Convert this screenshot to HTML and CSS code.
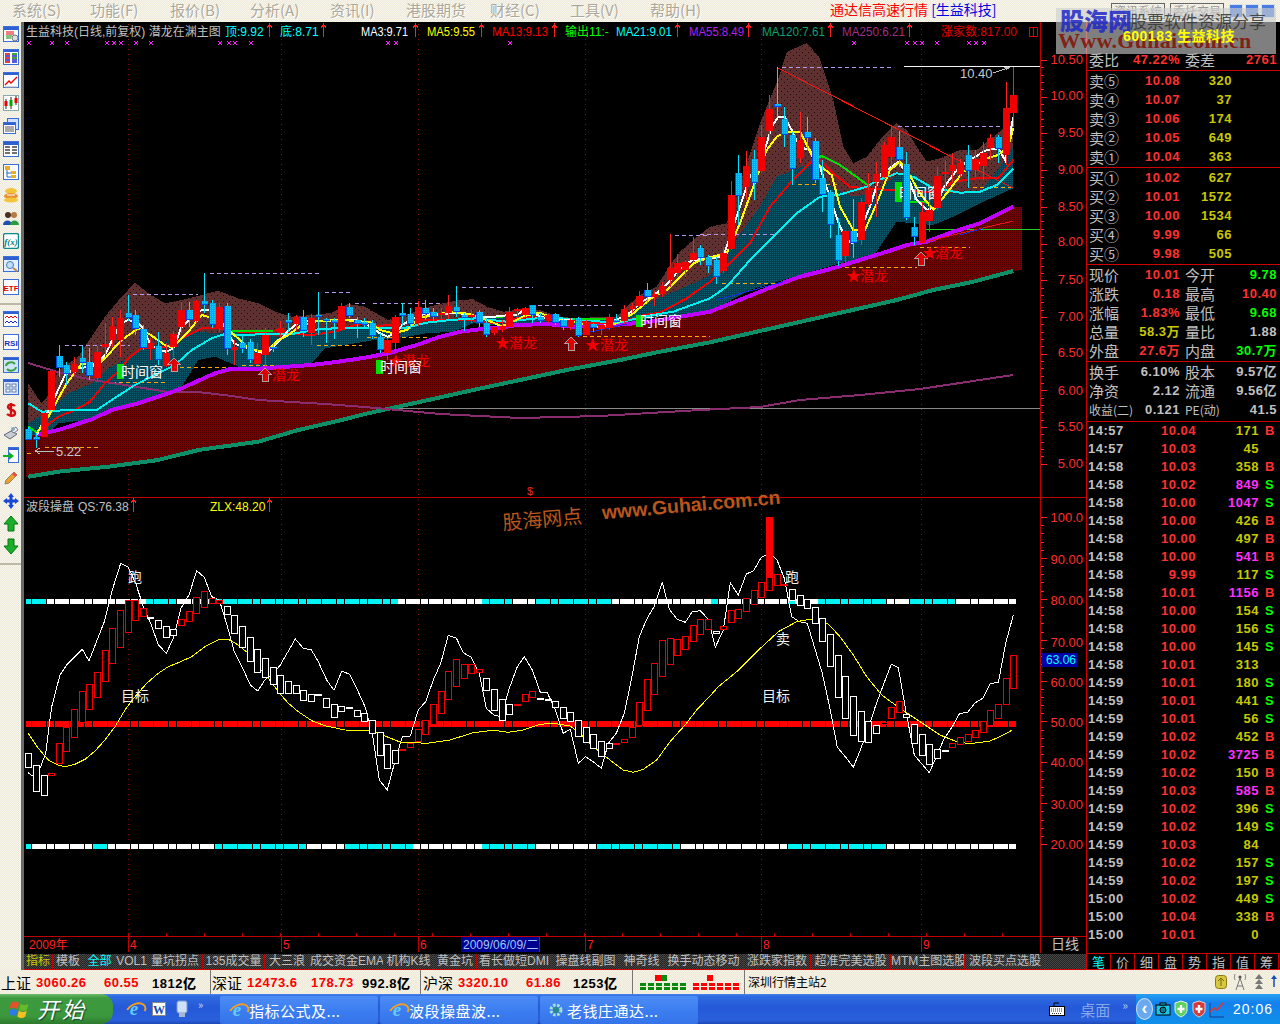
FILE: index.html
```html
<!DOCTYPE html>
<html lang="zh">
<head>
<meta charset="utf-8">
<title>通达信高速行情 [生益科技]</title>
<link rel="stylesheet" href="styles.css">
</head>
<body>
<div class="app">
  <header class="menu">
    <nav class="menu-items">
      <span>系统(S)</span><span>功能(F)</span><span>报价(B)</span><span>分析(A)</span><span>资讯(I)</span><span>港股期货</span><span>财经(C)</span><span>工具(V)</span><span>帮助(H)</span>
    </nav>
    <div class="title"><span class="title-red">通达信高速行情</span> <span class="title-blue">[生益科技]</span></div>
    <div class="win-tools">
      <span class="menu-btn">资讯系统</span><span class="menu-btn">委托交易</span>
      <span class="win-btn"></span><span class="win-btn"></span><span class="win-btn"></span>
    </div>
  </header>

  <div class="workspace">
    <aside class="tools">
      <div class="tool"><svg viewBox="0 0 16 16"><rect x=".5" y=".5" width="15" height="15" fill="#fff" stroke="#3a6ed8"/><rect x="1" y="1" width="14" height="3" fill="#2f5fd0"/><path d="M3 6h8M3 8h8" stroke="#d00"/><path d="M3 10h6M3 12h5" stroke="#080"/><circle cx="12" cy="12" r="3" fill="#ddd" stroke="#777"/></svg></div>
      <div class="tool"><svg viewBox="0 0 16 16"><rect x=".5" y=".5" width="15" height="15" fill="#fff" stroke="#3a6ed8"/><rect x="1" y="1" width="14" height="2" fill="#2f5fd0"/><path d="M2 5h5M2 9h5M2 13h5" stroke="#d00" stroke-width="1.4"/><path d="M9 5h5M9 9h5" stroke="#080" stroke-width="1.4"/><path d="M2 7h5M9 7h5M2 11h5M9 11h5M9 13h5" stroke="#22c" stroke-width="1.4"/></svg></div>
      <div class="tool"><svg viewBox="0 0 16 16"><rect x=".5" y=".5" width="15" height="15" fill="#fff" stroke="#3a6ed8"/><rect x="1" y="1" width="14" height="2" fill="#2f5fd0"/><path d="M2 13l4-4 2 2 6-6" fill="none" stroke="#e00" stroke-width="1.4"/><path d="M2 15h12" stroke="#aaa"/></svg></div>
      <div class="tool"><svg viewBox="0 0 16 16"><rect x=".5" y=".5" width="15" height="15" fill="#fff" stroke="#8aa"/><path d="M3 4v10M8 2v12M13 1v9" stroke="#222"/><rect x="1.5" y="6" width="3" height="5" fill="#e00"/><rect x="6.5" y="5" width="3" height="6" fill="#0a0"/><rect x="11.5" y="3" width="3" height="5" fill="#e00"/></svg></div>
      <div class="tool"><svg viewBox="0 0 16 16"><rect x="4.5" y=".5" width="11" height="11" fill="#cfe0ff" stroke="#3a6ed8"/><rect x=".5" y="4.5" width="12" height="11" fill="#fff" stroke="#3a6ed8"/><rect x="1" y="5" width="11" height="2" fill="#2f5fd0"/><path d="M2 9h9M2 11h9M2 13h9" stroke="#555"/></svg></div>
      <div class="tool"><svg viewBox="0 0 16 16"><rect x=".5" y=".5" width="15" height="15" fill="#fff" stroke="#3a6ed8"/><rect x="1" y="1" width="14" height="3" fill="#2f5fd0"/><path d="M2 6h5M9 6h5M2 9h5M9 9h5M2 12h5M9 12h5" stroke="#444" stroke-width="1.4"/></svg></div>
      <div class="tool"><svg viewBox="0 0 16 16"><rect x=".5" y=".5" width="15" height="15" fill="#fff" stroke="#3a6ed8"/><rect x="2" y="2" width="5" height="4" fill="#e8b020"/><path d="M4 6v7h4M4 9h4" stroke="#26c" fill="none"/><rect x="8" y="7" width="5" height="3" fill="#e8b020"/><rect x="8" y="11" width="5" height="3" fill="#e8b020"/></svg></div>
      <div class="tool"><svg viewBox="0 0 16 16"><ellipse cx="8" cy="4" rx="6" ry="3" fill="#f4c53a"/><ellipse cx="8" cy="9" rx="7" ry="3" fill="#e89030"/><ellipse cx="8" cy="13" rx="7" ry="2.6" fill="#f4c53a"/><path d="M4 8h8" stroke="#fff"/></svg></div>
      <div class="tool"><svg viewBox="0 0 16 16"><circle cx="5" cy="5" r="3" fill="#4a3020"/><circle cx="11" cy="5" r="3" fill="#b87a40"/><path d="M0 15c0-6 9-6 9 0z" fill="#1c4fb0"/><path d="M7 15c0-6 9-6 9 0z" fill="#2a9a40"/></svg></div>
      <div class="tool"><svg viewBox="0 0 16 16"><rect x=".5" y=".5" width="15" height="15" rx="2" fill="#fff" stroke="#0a8a8a" stroke-width="1.4"/><text x="8" y="12" class="icon-fx">f(x)</text></svg></div>
      <div class="tool"><svg viewBox="0 0 16 16"><rect x=".5" y=".5" width="15" height="15" fill="#e4efff" stroke="#3a6ed8"/><rect x="1" y="1" width="14" height="3" fill="#2f5fd0"/><circle cx="7" cy="9" r="3.5" fill="#bfe0ff" stroke="#4a7ab8"/><path d="M10 12l4 3" stroke="#c88a30" stroke-width="2"/></svg></div>
      <div class="tool"><svg viewBox="0 0 16 16"><rect x=".5" y=".5" width="15" height="15" fill="#fff" stroke="#3a6ed8"/><text x="8" y="12" class="icon-etf">ETF</text></svg></div>
      <div class="tool-sep"></div>
      <div class="tool tool-b"><svg viewBox="0 0 16 16"><rect x=".5" y=".5" width="15" height="15" fill="#fff" stroke="#3a6ed8"/><rect x="1" y="1" width="14" height="2" fill="#2f5fd0"/><path d="M2 7l2-2 2 2 2-2 2 2 2-2 2 2" fill="none" stroke="#e00"/><path d="M2 12l2-2 2 2 2-2 2 2 2-2 2 2" fill="none" stroke="#22c"/></svg></div>
      <div class="tool tool-b"><svg viewBox="0 0 16 16"><rect x=".5" y=".5" width="15" height="15" fill="#fff" stroke="#3a6ed8"/><text x="8" y="12" class="icon-rsi">RSI</text></svg></div>
      <div class="tool tool-b"><svg viewBox="0 0 16 16"><rect x=".5" y=".5" width="15" height="15" fill="#cfe4f8" stroke="#3a6ed8"/><rect x="1" y="1" width="14" height="2" fill="#2f5fd0"/><path d="M3 9a5 4 0 0 1 9-2M13 10a5 4 0 0 1-9 2" fill="none" stroke="#3aa040" stroke-width="2"/></svg></div>
      <div class="tool tool-b"><svg viewBox="0 0 16 16"><rect x=".5" y=".5" width="15" height="15" fill="#dfeaff" stroke="#3a6ed8"/><rect x="1" y="1" width="14" height="2" fill="#2f5fd0"/><rect x="3" y="5" width="4" height="3" fill="#fff" stroke="#5a7ab0"/><rect x="9" y="5" width="4" height="3" fill="#fff" stroke="#5a7ab0"/><rect x="3" y="10" width="4" height="3" fill="#fff" stroke="#5a7ab0"/><rect x="9" y="10" width="4" height="3" fill="#fff" stroke="#5a7ab0"/></svg></div>
      <div class="tool tool-b"><svg viewBox="0 0 16 16"><path d="M12 4c-2-2-7-2-7 1s7 2 7 6-6 3-8 1M8 1v14" fill="none" stroke="#d01010" stroke-width="2.4"/></svg></div>
      <div class="tool tool-b"><svg viewBox="0 0 16 16"><path d="M1 10l7-4 6 3-7 5z" fill="#c8ccd4" stroke="#667"/><path d="M8 6l5-4 2 3-4 3z" fill="#eef" stroke="#778"/><circle cx="10" cy="4" r="2" fill="#8ab"/></svg></div>
      <div class="tool tool-b"><svg viewBox="0 0 16 16"><rect x="5.5" y=".5" width="10" height="15" fill="#fff" stroke="#3a6ed8"/><rect x="6" y="1" width="9" height="2" fill="#2f5fd0"/><path d="M0 8h6V5l5 4-5 4v-3H0z" fill="#10b020"/></svg></div>
      <div class="tool tool-b"><svg viewBox="0 0 16 16"><path d="M11 2l3 3-8 8-4 1 1-4z" fill="#f0a030" stroke="#885"/><path d="M11 2l3 3-2 2-3-3z" fill="#e85050"/></svg></div>
      <div class="tool tool-b"><svg viewBox="0 0 16 16"><path d="M8 0l3 4H9.500v2.500H12V5l4 3-4 3V9.500H9.500V12H11l-3 4-3-4h1.500V9.500H4V11L0 8l4-3v1.500h2.500V4H5z" fill="#1848d8"/></svg></div>
      <div class="tool tool-b"><svg viewBox="0 0 16 16"><path d="M8 0l7 8h-4v7H5V8H1z" fill="#18b028" stroke="#0a7015"/></svg></div>
      <div class="tool tool-b"><svg viewBox="0 0 16 16"><path d="M8 16L1 8h4V1h6v7h4z" fill="#18b028" stroke="#0a7015"/></svg></div>
      <div class="tool-sep"></div>
    </aside>

    <main class="main">
      <svg class="chart" viewBox="24 22 1062 931" width="1062" height="931" xmlns="http://www.w3.org/2000/svg">
        <defs>
          <pattern id="brownDots" width="6" height="6" patternUnits="userSpaceOnUse"><rect width="6" height="6" fill="#5e3030"/><rect x="1" y="1" width="1" height="1" fill="#200c0c"/><rect x="4" y="4" width="1" height="1" fill="#200c0c"/></pattern>
          <pattern id="tealDots" width="2" height="2" patternUnits="userSpaceOnUse"><rect width="2" height="2" fill="#083f50"/><rect width="1" height="1" fill="#0b5c6e"/></pattern>
          <pattern id="redDots" width="2" height="2" patternUnits="userSpaceOnUse"><rect width="2" height="2" fill="#740000"/><rect width="1" height="1" fill="#4c0000"/></pattern>
          <pattern id="blueDots" width="2" height="2" patternUnits="userSpaceOnUse"><rect width="2" height="2" fill="#00a8f8"/><rect width="1" height="1" fill="#10d0ff"/></pattern>
          <g id="up"><path d="M3.500 1V14M1 5L3.500 1L6 5" fill="none" stroke="#ff2020"/></g>
        </defs>
        <rect x="24" y="22" width="1062" height="931" fill="#000"/>
        <g id="plot"></g>

        <g class="lab12">
          <text x="26" y="36" fill="#c0c0c0">生益科技(日线,前复权) 潜龙在渊主图</text>
          <text x="225" y="36" fill="#00ffff">顶:9.92</text><use href="#up" x="266" y="23"/>
          <text x="280" y="36" fill="#00ffff">底:8.71</text><use href="#up" x="320" y="23"/>
          <text x="361" y="36" fill="#fff" textLength="47" lengthAdjust="spacingAndGlyphs">MA3:9.71</text><use href="#up" x="412" y="23"/>
          <text x="427" y="36" fill="#ff0" textLength="48" lengthAdjust="spacingAndGlyphs">MA5:9.55</text><use href="#up" x="478" y="23"/>
          <text x="492" y="36" fill="#f00" textLength="56" lengthAdjust="spacingAndGlyphs">MA13:9.13</text><use href="#up" x="551" y="23"/>
          <text x="565" y="36" fill="#0f0">输出11:-</text>
          <text x="616" y="36" fill="#00ffff" textLength="56" lengthAdjust="spacingAndGlyphs">MA21:9.01</text><use href="#up" x="674" y="23"/>
          <text x="689" y="36" fill="#b020f0" textLength="55" lengthAdjust="spacingAndGlyphs">MA55:8.49</text><use href="#up" x="745" y="23"/>
          <text x="762" y="36" fill="#0fa070" textLength="63" lengthAdjust="spacingAndGlyphs">MA120:7.61</text><use href="#up" x="827" y="23"/>
          <text x="842" y="36" fill="#a03080" textLength="63" lengthAdjust="spacingAndGlyphs">MA250:6.21</text><use href="#up" x="906" y="23"/>
          <text x="941" y="36" fill="#e00000">涨家数:817.00</text>
        </g>
        <path d="M1029.500 27.500h8v9h-8zM1033.500 27.500v9" class="box-mark"/>

        <g class="lab13">
          <text x="960" y="78" fill="#c8c8c8">10.40</text>
          <text x="56" y="456" fill="#c8c8c8">5.22</text>
        </g>
        <path d="M993 73L1008 68M1004 67L1010 67L1006 70" fill="none" stroke="#c0c0c0"/>
        <path d="M54 451H36M40 448L35 451L40 454" fill="none" stroke="#c0c0c0"/>

        <g class="lab-signal">
          <text x="860" y="281">潜龙</text><text x="935" y="258">潜龙</text>
          <text x="509" y="348">潜龙</text><text x="600" y="350">潜龙</text>
          <text x="402" y="366">潜龙</text><text x="272" y="380">潜龙</text>
        </g>
        <g class="lab-star">
          <text x="846" y="281">★</text><text x="922" y="258">★</text>
          <text x="495" y="348">★</text><text x="585" y="350">★</text>
          <text x="388" y="366">★</text>
        </g>
        <g class="lab-win">
          <rect x="117" y="364" width="7" height="15" fill="#00e000"/><text x="121" y="377">时间窗</text>
          <rect x="376" y="360" width="7" height="14" fill="#00e000"/><text x="380" y="372">时间窗</text>
          <rect x="636" y="315" width="7" height="12" fill="#00e000"/><text x="640" y="326">时间窗</text>
          <rect x="895" y="182" width="7" height="20" fill="#00e000"/><text x="899" y="198">时间窗</text>
        </g>
        <g id="replot"></g>

        <text x="527" y="495" class="mini-s">$</text>

        <g class="lab12">
          <text x="26" y="511" fill="#c0c0c0">波段操盘</text>
          <text x="78" y="511" fill="#c0c0c0">QS:76.38</text><use href="#up" x="130" y="498"/>
          <text x="210" y="511" fill="#ff0">ZLX:48.20</text><use href="#up" x="266" y="498"/>
        </g>
        <g class="lab-white">
          <text x="128" y="582">跑</text><text x="785" y="582">跑</text>
          <text x="776" y="644">卖</text>
          <text x="121" y="701">目标</text><text x="762" y="701">目标</text>
        </g>

        <g id="axisLabels" class="lab-axis">
          <text x="1083" y="64">10.50</text><text x="1083" y="100">10.00</text><text x="1083" y="137">9.50</text><text x="1083" y="174">9.00</text><text x="1083" y="211">8.50</text><text x="1083" y="246">8.00</text><text x="1083" y="284">7.50</text><text x="1083" y="321">7.00</text><text x="1083" y="357">6.50</text><text x="1083" y="395">6.00</text><text x="1083" y="431">5.50</text><text x="1083" y="468">5.00</text>
          <text x="1083" y="522">100.0</text><text x="1083" y="564">90.00</text><text x="1083" y="605">80.00</text><text x="1083" y="647">70.00</text><text x="1083" y="687">60.00</text><text x="1083" y="727">50.00</text><text x="1083" y="767">40.00</text><text x="1083" y="809">30.00</text><text x="1083" y="849">20.00</text>
        </g>
        <rect x="1042" y="653" width="36" height="14" fill="#0000a8"/>
        <text x="1076" y="664" class="lab-cur">63.06</text>

        <g class="brand" transform="rotate(-5 503 530)">
          <text x="503" y="530" class="brand-cn">股海网点</text>
          <text x="603" y="528" class="brand-en">www.Guhai.com.cn</text>
        </g>

        <rect x="461" y="937" width="78" height="15" fill="#000090"/>
        <g class="lab-date">
          <text x="29" y="949">2009年</text><text x="130" y="949">4</text><text x="283" y="949">5</text><text x="420" y="949">6</text><text x="587" y="949">7</text><text x="763" y="949">8</text><text x="923" y="949">9</text>
          <text x="463" y="949" class="date-sel">2009/06/09/二</text>
          <text x="1051" y="949" class="date-kind">日线</text>
        </g>
      </svg>

      <section class="panel">
        <div class="q-head">
          <div class="stock">600183 生益科技</div>
          <div class="q-stat"><span class="lb">委比</span><b class="red">47.22%</b><span class="lb lb2">委差</span><b class="red">2761</b></div>
        </div>
        <div class="q-group">
          <div class="q-row"><span class="lb">卖⑤</span><b class="red">10.08</b><b class="yel">320</b></div>
          <div class="q-row"><span class="lb">卖④</span><b class="red">10.07</b><b class="yel">37</b></div>
          <div class="q-row"><span class="lb">卖③</span><b class="red">10.06</b><b class="yel">174</b></div>
          <div class="q-row"><span class="lb">卖②</span><b class="red">10.05</b><b class="yel">649</b></div>
          <div class="q-row"><span class="lb">卖①</span><b class="red">10.04</b><b class="yel">363</b></div>
        </div>
        <div class="q-group">
          <div class="q-row"><span class="lb">买①</span><b class="red">10.02</b><b class="yel">627</b></div>
          <div class="q-row"><span class="lb">买②</span><b class="red">10.01</b><b class="yel">1572</b></div>
          <div class="q-row"><span class="lb">买③</span><b class="red">10.00</b><b class="yel">1534</b></div>
          <div class="q-row"><span class="lb">买④</span><b class="red">9.99</b><b class="yel">66</b></div>
          <div class="q-row"><span class="lb">买⑤</span><b class="red">9.98</b><b class="yel">505</b></div>
        </div>
        <div class="q-group">
          <div class="q-stat"><span class="lb">现价</span><b class="red">10.01</b><span class="lb lb2">今开</span><b class="grn">9.78</b></div>
          <div class="q-stat"><span class="lb">涨跌</span><b class="red">0.18</b><span class="lb lb2">最高</span><b class="red">10.40</b></div>
          <div class="q-stat"><span class="lb">涨幅</span><b class="red">1.83%</b><span class="lb lb2">最低</span><b class="grn">9.68</b></div>
          <div class="q-stat"><span class="lb">总量</span><b class="yel">58.3万</b><span class="lb lb2">量比</span><b class="gry">1.88</b></div>
          <div class="q-stat"><span class="lb">外盘</span><b class="red">27.6万</b><span class="lb lb2">内盘</span><b class="grn">30.7万</b></div>
        </div>
        <div class="q-group q-fund">
          <div class="q-stat"><span class="lb">换手</span><b class="gry">6.10%</b><span class="lb lb2">股本</span><b class="gry">9.57亿</b></div>
          <div class="q-stat"><span class="lb">净资</span><b class="gry">2.12</b><span class="lb lb2">流通</span><b class="gry">9.56亿</b></div>
          <div class="q-stat"><span class="lb lb-narrow">收益(二)</span><b class="gry">0.121</b><span class="lb lb2 lb-narrow">PE(动)</span><b class="gry">41.5</b></div>
        </div>
        <div class="ticks" id="ticks"></div>
      </section>

      <div class="tabs">
        <span class="tab c-yel">指标</span><span class="tab">模板</span><span class="tab c-cyan">全部</span><span class="tab">VOL1</span><span class="tab">量坑拐点</span><span class="tab">135成交量</span><span class="tab">大三浪</span><span class="tab">成交资金EMA</span><span class="tab">机构K线</span><span class="tab">黄金坑</span><span class="tab">看长做短DMI</span><span class="tab">操盘线副图</span><span class="tab">神奇线</span><span class="tab">换手动态移动</span><span class="tab">涨跌家指数</span><span class="tab">超准完美选股</span><span class="tab">MTM主图选股</span><span class="tab">波段买点选股</span><span class="tab"></span>
      </div>
      <div class="side-tabs">
        <span class="c-cyan">笔</span><span>价</span><span>细</span><span>盘</span><span>势</span><span>指</span><span>值</span><span>筹</span>
      </div>
    </main>
  </div>

  <footer class="status">
    <div class="idx idx-a"><span class="idx-n">上证</span><b class="s-red">3060.26</b><b class="s-red">60.55</b><b>1812亿</b></div>
    <div class="idx idx-b"><span class="idx-n">深证</span><b class="s-red">12473.6</b><b class="s-red">178.73</b><b>992.8亿</b></div>
    <div class="idx idx-c"><span class="idx-n">沪深</span><b class="s-red">3320.10</b><b class="s-red">61.86</b><b>1253亿</b></div>
    <svg class="bars" viewBox="0 0 102 24" width="102" height="24">
      <rect x="15" y="5" width="6" height="6" fill="#f00"/><rect x="21" y="5" width="6" height="6" fill="#0a8a0a"/><rect x="67" y="5" width="6" height="6" fill="#f00"/>
      <path d="M0 14.500h47M0 18.500h47" stroke="#0a8a0a" stroke-width="3" stroke-dasharray="6 2"/>
      <path d="M53 14.500h47M53 18.500h47" stroke="#f00" stroke-width="3" stroke-dasharray="6 2"/>
    </svg>
    <span class="station">深圳行情主站2</span>
    <div class="status-icons">
      <svg viewBox="0 0 12 14" width="12" height="14"><rect x=".5" y=".5" width="11" height="13" rx="3" fill="#d8c840" stroke="#887a10"/><path d="M6 3v8M3 6l3-3 3 3" fill="none" stroke="#776a00"/></svg>
      <svg viewBox="0 0 14 18" width="14" height="18"><path d="M7 5L3 17M7 5l4 12M4 13h6" fill="none" stroke="#777"/><circle cx="7" cy="4" r="1.600" fill="#555"/><path d="M2 1a7 7 0 0 0 0 6M12 1a7 7 0 0 1 0 6" fill="none" stroke="#888"/></svg>
      <svg viewBox="0 0 12 16" width="12" height="16"><path d="M6 0l4 5H2zM6 5l4 5H2zM6 10l4 5H2z" fill="#777"/></svg>
      <svg viewBox="0 0 6 14" width="6" height="14"><path d="M3 1v11" stroke="#124ac0" stroke-width="1.500"/><path d="M3 0l3 4H0z" fill="#124ac0"/></svg>
    </div>
  </footer>

  <div class="taskbar">
    <div class="start">
      <svg viewBox="0 0 22 22" width="22" height="22"><path d="M2 5q4-3 8 0l-1.500 6q-4-3-8 0z" fill="#e8502a"/><path d="M11.500 5.500q4 3 8 0l-1.500 6q-4 3-8 0z" fill="#66bb2a"/><path d="M.300 12.500q4-3 8 0L7 18.500q-4-3-8 0z" fill="#2a7ae8"/><path d="M9.800 12.500q4 3 8 0l-1.500 6q-4 3-8 0z" fill="#f4c020"/></svg>
      <span class="start-t">开始</span>
    </div>
    <div class="quick">
      <span class="ie">e</span>
      <span class="word">W</span>
      <svg viewBox="0 0 14 18" width="14" height="18"><rect x="2" y="1" width="10" height="12" rx="2" fill="#cfe0f8" stroke="#7a9ad0"/><rect x="4" y="13" width="6" height="4" fill="#a8b8d0"/></svg>
      <span class="more">»</span>
    </div>
    <div class="task"><span class="ie">e</span><span class="task-t">指标公式及...</span></div>
    <div class="task"><span class="ie">e</span><span class="task-t">波段操盘波...</span></div>
    <div class="task"><svg viewBox="0 0 16 16" width="16" height="16"><circle cx="8" cy="8" r="5" fill="none" stroke="#a8e0d8" stroke-width="3" stroke-dasharray="2.500 1.500"/><circle cx="8" cy="8" r="3" fill="#2a8a8a"/></svg><span class="task-t">老钱庄通达...</span></div>
    <div class="task-tail">
      <svg viewBox="0 0 16 16" width="16" height="16"><rect x=".5" y="5.500" width="15" height="9" fill="#fff" stroke="#000"/><path d="M2 8h12M2 10h12M3 12.500h10" stroke="#333" stroke-dasharray="1 1"/><path d="M5 5V2h5" fill="none" stroke="#000"/></svg>
      <span class="desk">桌面</span><span class="desk-more">»</span>
    </div>
    <div class="tray">
      <span class="chev">‹</span>
      <svg viewBox="0 0 16 16" width="16" height="16"><rect x="1" y="4" width="14" height="10" fill="#18c8e8" stroke="#000"/><circle cx="8" cy="9" r="3" fill="#0a7a90" stroke="#000"/><rect x="5" y="2" width="6" height="2" fill="#18c8e8" stroke="#000"/></svg>
      <svg viewBox="0 0 16 18" width="16" height="18"><path d="M8 1l6 2v7c0 4-4 6-6 7-2-1-6-3-6-7V3z" fill="#60d060" stroke="#e8f4e8"/><path d="M8 5v8M4.500 9h7" stroke="#fff" stroke-width="2.400"/></svg>
      <svg viewBox="0 0 16 18" width="16" height="18"><path d="M8 1l6 2v7c0 4-4 6-6 7-2-1-6-3-6-7V3z" fill="#d83838" stroke="#d8d8d8"/><path d="M8 5v8M4.500 9h7" stroke="#fff" stroke-width="2.400"/></svg>
      <svg viewBox="0 0 16 18" width="16" height="18"><path d="M1 3v14h14" fill="none" stroke="#123a90"/><path d="M1 12l4-4 3 2 6-7" fill="none" stroke="#f03020" stroke-width="1.500"/></svg>
      <span class="clock">20:06</span>
    </div>
  </div>

  <div class="watermark">
    <span class="wm-cn">股海网</span><span class="wm-sub">股票软件资源分享</span>
    <span class="wm-en">Www.Guhai.com.cn</span>
  </div>
</div>
<script src="chart.js"></script>
</body>
</html>
```
FILE: styles.css
```css
* { box-sizing: border-box; }
html, body { margin: 0; padding: 0; background: #000; }
body { font-family: "Liberation Sans", "Noto Sans CJK SC", sans-serif; }
.app { position: relative; width: 1280px; height: 1024px; overflow: hidden; display: flex; flex-direction: column; }

.menu { height: 22px; flex: none; display: flex; align-items: flex-start; padding-left: 12px;
  background: repeating-conic-gradient(#ece9d8 0 25%, #f8f6ee 0 50%) 0 0 / 2px 2px; }
.menu-items { display: grid; grid-template-columns: 78px 80px 80px 80px 76px 84px 80px 80px 80px; width: 738px; flex: none;
  font: 15px/19px "Noto Sans CJK SC", sans-serif; color: #aca899; text-shadow: 1px 1px 0 #fff; }
.title { margin-left: 80px; font: 14px/19px "Noto Sans CJK SC", sans-serif; white-space: nowrap; }
.title-red { color: #f00; }
.title-blue { color: #0000e0; }
.win-tools { margin-left: auto; display: flex; align-items: center; gap: 2px; padding: 3px 5px 0 0; }
.menu-btn { width: 54px; height: 16px; border: 1px solid #666; font: 12px/14px "Noto Sans CJK SC", sans-serif; color: #999; text-align: center; margin-right: 3px; }
.win-btn { width: 14px; height: 14px; background: #4a7ce0; border: 1px solid #d8e0f0; }

.workspace { height: 948px; flex: none; display: flex; }
.tools { width: 24px; flex: none; display: flex; flex-direction: column; align-items: flex-start;
  background: repeating-conic-gradient(#ece9d8 0 25%, #f8f6ee 0 50%) 0 0 / 2px 2px;
  border-right: 3px solid #6a6a6a; }
.tool { height: 23px; width: 21px; display: flex; align-items: center; justify-content: center; flex: none; }
.tool-b { height: 22.7px; }
.tool svg { width: 16px; height: 16px; display: block; }
.tool-sep { height: 10px; width: 21px; flex: none; border-top: 5px solid transparent; border-bottom: 3px solid transparent; background: #bcb8a8; background-clip: content-box; }
.icon-fx { font: italic bold 9px "Liberation Serif", serif; fill: #0a7a7a; text-anchor: middle; }
.icon-etf { font: bold 8px "Liberation Sans", sans-serif; fill: #d00; text-anchor: middle; }
.icon-rsi { font: bold 8px "Liberation Sans", sans-serif; fill: #1030c0; text-anchor: middle; }

.main { width: 1256px; background: #000; display: grid; grid-template-columns: 1062px 194px; grid-template-rows: 931px 17px; }
.chart { display: block; shape-rendering: crispEdges; }
.lab12 text { font: 12px "Liberation Sans", "Noto Sans CJK SC", sans-serif; }
.lab13 text { font: 13px "Liberation Sans", sans-serif; }
.box-mark { fill: none; stroke: #e00000; }
.lab-signal text { font: 14px "Noto Sans CJK SC", sans-serif; fill: #f00000; }
.lab-star text { font: 15px "Noto Sans CJK SC", sans-serif; fill: #f00000; }
.lab-win text { font: 14px "Noto Sans CJK SC", sans-serif; fill: #fff; }
.lab-white text { font: 14px "Noto Sans CJK SC", sans-serif; fill: #f0f0f0; }
.lab-axis text { font: 13px "Liberation Sans", sans-serif; fill: #ff2c2c; text-anchor: end; }
.lab-cur { font: 12px "Liberation Sans", sans-serif; fill: #00ffff; text-anchor: end; }
.mini-s { font: 11px "Liberation Sans", sans-serif; fill: #e03020; }
.brand-cn { font: 20px "Noto Sans CJK SC", sans-serif; fill: #b8561c; }
.brand-en { font: bold 19.500px "Liberation Sans", sans-serif; fill: #b8561c; }
.lab-date text { font: 12px "Liberation Sans", "Noto Sans CJK SC", sans-serif; fill: #ff2020; }
.lab-date .date-sel { fill: #9fc8ff; }
.lab-date .date-kind { fill: #c0c0c0; font-size: 14px; }

.panel { border-left: 1px solid #d00000; background: #000; grid-row: 1; grid-column: 2; height: 931px; overflow: hidden;
  font-family: "Noto Sans CJK SC", sans-serif; }
.q-head { height: 49px; border-bottom: 1px solid #d00000; padding-bottom: 1px; display: flex; flex-direction: column; justify-content: flex-end; }
.stock { position: relative; z-index: 2; height: 27px; padding-left: 36px; font: bold 14px/27px "Liberation Sans", "Noto Sans CJK SC", sans-serif; color: #ff0; letter-spacing: .5px; }
.q-group { height: 97px; border-bottom: 1px solid #d00000; }
.q-fund { height: 60px; }
.q-row, .q-stat { height: 19px; display: grid; align-items: center; padding-left: 2px; font-size: 13px; line-height: 19px; white-space: nowrap; }
.q-row { grid-template-columns: 32px 59px 52px; }
.q-stat { grid-template-columns: 32px 59px 37px 60px; }
.q-row b, .q-stat b { text-align: right; font: bold 13px/19px "Liberation Sans", "Noto Sans CJK SC", sans-serif; letter-spacing: .5px; }
.lb { font: 15px/19px "Noto Sans CJK SC", sans-serif; color: #c0c0c0; }
.lb2 { padding-left: 5px; }
.lb-narrow { font-size: 12px; overflow: visible; }
.red { color: #ff3030; }
.yel { color: #c8c800; }
.grn { color: #00ff00; }
.gry { color: #c0c0c0; }
.mag { color: #ff30ff; }

.ticks { padding-left: 1px; }
.tick { height: 18px; display: grid; grid-template-columns: 38px 70px 63px 20px; align-items: center; font: bold 13px/18px "Liberation Sans", sans-serif; letter-spacing: .5px; }
.tick-t { color: #c0c0c0; }
.tick-p { text-align: right; color: #ff3030; }
.tick-v { text-align: right; }
.tick-f { padding-left: 6px; }

.tabs { grid-row: 2; grid-column: 1; display: grid; height: 17px;
  grid-template-columns: 29px 31px 32px 32px 55px 62px 45px 74px 50px 43px 75px 68px 44px 80px 67px 80px 74px 81px 1fr;
  background: repeating-conic-gradient(#222 0 25%, #484848 0 50%) 0 0 / 2px 2px;
  border-bottom: 1px solid #d00000; border-top: 1px solid #000; }
.tab { border-right: 1px solid #c00000; text-align: center; font: 12px/15px "Liberation Sans", "Noto Sans CJK SC", sans-serif; color: #c0c0c0; white-space: nowrap; overflow: hidden; }
.side-tabs { grid-row: 2; grid-column: 2; display: grid; grid-template-columns: repeat(8, 24px); height: 17px; border-left: 1px solid #d00000; border-bottom: 1px solid #d00000; border-top: 1px solid #d00000; }
.side-tabs span { border-right: 1px solid #c00000; text-align: center; font: 13px/15px "Noto Sans CJK SC", sans-serif; color: #c0c0c0; }
.tab.c-yel { color: #c8c800; }
.side-tabs .c-cyan, .tab.c-cyan { color: #00ffff; }

.status { height: 24px; flex: none; display: flex; align-items: center;
  background: repeating-conic-gradient(#ece9d8 0 25%, #f6f3e6 0 50%) 0 0 / 2px 2px; color: #000; }
.idx { display: grid; align-items: center; height: 24px; white-space: nowrap; border-right: 1px solid #777; font: bold 13px "Liberation Sans", "Noto Sans CJK SC", sans-serif; letter-spacing: .5px; }
.idx-a { width: 211px; padding-left: 1px; grid-template-columns: 35px 68px 48px 1fr; }
.idx-b { width: 210px; padding-left: 1px; grid-template-columns: 35px 64px 51px 1fr; }
.idx-c { width: 212px; padding-left: 2px; grid-template-columns: 35px 68px 47px 1fr; }
.idx-n { font: 15px "Noto Sans CJK SC", sans-serif; letter-spacing: 0; }
.s-red { color: #f00; }
.bars { margin-left: 7px; flex: none; }
.station { margin-left: 2px; padding-left: 3px; border-left: 1px solid #777; font: 12px/24px "Noto Sans CJK SC", sans-serif; white-space: nowrap; }
.status-icons { margin-left: auto; display: flex; align-items: center; gap: 6px; padding-right: 3px; }
.status-icons svg { display: block; }

.taskbar { height: 30px; flex: none; display: flex; align-items: stretch; color: #fff;
  background: linear-gradient(#4c86ec 0, #2f6be0 2px, #2458d8 14px, #2a60dc 26px, #1d48b8 100%); font-family: "Noto Sans CJK SC", sans-serif; }
.start { width: 113px; height: 30px; flex: none; display: flex; align-items: center; gap: 6px; padding-left: 9px; border-radius: 0 12px 12px 0;
  background: linear-gradient(#6cbb6c 0, #3e9a3e 4px, #3c983c 22px, #2c7a2c 100%); }
.start-t { display: block; margin-top: -2px; font: italic 22px "Noto Sans CJK SC", sans-serif; text-shadow: 1px 1px 1px #143; letter-spacing: 3px; }
.quick { width: 107px; flex: none; display: flex; align-items: center; gap: 9px; padding-left: 12px; }
.more { font-size: 11px; color: #cde; margin-top: -10px; }
.ie { position: relative; width: 18px; height: 18px; flex: none; display: block; font: italic bold 19px/17px "Liberation Serif", serif; color: #62ccff; text-align: center; }
.ie::after { content: ""; position: absolute; left: 0; top: 3px; width: 18px; height: 11px; border: 2px solid #f0a020; border-left-color: transparent; border-bottom-color: transparent; border-radius: 50%; transform: rotate(-25deg); }
.word { width: 14px; height: 14px; flex: none; background: #fff; color: #1848b0; font: bold 12px/14px "Liberation Serif", serif; text-align: center; border: 1px solid #888; }
.task { width: 158px; margin: 2px 2px 0 0; flex: none; display: flex; align-items: center; gap: 3px; padding-left: 8px; background: linear-gradient(#4c8cf6, #3a7cf0 60%, #3574e8); border-radius: 2px; }
.task-t { font-size: 15px; white-space: nowrap; letter-spacing: .5px; }
.task-tail { flex: 1; display: flex; align-items: center; justify-content: flex-end; gap: 15px; padding-right: 18px; }
.desk { font-size: 15px; color: #88a8e8; }
.desk-more { font-size: 12px; color: #a8c8f0; margin: -10px -10px 0 -3px; }
.tray { width: 144px; flex: none; display: flex; align-items: center; gap: 2px; background: linear-gradient(#26a0f0, #1480ee 30%, #1090e8); }
.chev { width: 17px; height: 22px; flex: none; border-radius: 50%; background: #6aa8f0; font: bold 18px/18px "Liberation Sans", sans-serif; text-align: center; border: 1px solid #cde; }
.clock { margin-left: 6px; font: 14px "Liberation Sans", sans-serif; letter-spacing: 1px; }

.watermark { position: absolute; z-index: 1; left: 1056px; top: 8px; width: 220px; height: 46px; background: rgba(205, 205, 205, .62); pointer-events: none; }
.wm-cn { position: absolute; left: 4px; top: -3px; font: 900 24px/30px "Noto Sans CJK SC", sans-serif; color: rgba(30, 40, 200, .85); }
.wm-sub { position: absolute; left: 74px; top: 1px; font: 17px/24px "Noto Sans CJK SC", sans-serif; color: rgba(50, 50, 50, .85); white-space: nowrap; }
.wm-en { position: absolute; left: 2px; top: 20px; font: bold 22px/26px "Liberation Serif", serif; color: rgba(130, 20, 10, .9); white-space: nowrap; letter-spacing: .3px; }
```
FILE: chart.js
```js
const NS = 'http://www.w3.org/2000/svg';
const plot = document.getElementById('plot');
const replot = document.getElementById('replot');
let layer = plot;
const X = i => 28.3 + 7.636 * i;
const Z8 = [25, 260], Z11 = [360, 220], Z7 = [700, 60];
const L9 = [25, 550], L12 = [360, 570], L10 = [700, 500];

function el(tag, attrs, parent) {
  const e = document.createElementNS(NS, tag);
  for (const k in attrs) e.setAttribute(k, attrs[k]);
  (parent || layer).appendChild(e);
  return e;
}
function pts(o, a) {
  const out = [];
  for (let i = 0; i < a.length; i += 2) out.push([o[0] + a[i] / 3, o[1] + a[i + 1] / 3]);
  return out;
}
function join() {
  const out = [];
  for (const part of arguments) for (const p of part) if (!out.length || p[0] > out[out.length - 1][0]) out.push(p);
  return out;
}
const str = p => p.map(q => q[0].toFixed(1) + ',' + q[1].toFixed(1)).join(' ');
function line(p, color, w) { el('polyline', { points: str(p), fill: 'none', stroke: color, 'stroke-width': w }); }
function area(top, bottom, fill) { el('polygon', { points: str(top.concat(bottom.slice().reverse())), fill }); }
function dash(o, a, color) {
  for (let i = 0; i < a.length; i += 3) {
    const y = Math.round(o[1] + a[i + 2] / 3) + .5;
    el('line', { x1: o[0] + a[i] / 3, x2: o[0] + a[i + 1] / 3, y1: y, y2: y, stroke: color, 'stroke-dasharray': '4 3' });
  }
}

/* ---- month guides ---- */
[128.5, 281.5, 418.5, 585.5, 761.5, 921.5].forEach(x => {
  el('line', { x1: x, x2: x, y1: 24, y2: 936, stroke: '#8a1010', 'stroke-dasharray': '1 4' });
});

/* ---- envelopes ---- */
const brownTop = join(
  pts(Z8, [10,370,30,400,50,430,75,400,100,330,160,290,200,230,240,170,290,110,330,68,370,100,420,130,470,120,530,105,580,92,640,115,700,130,750,155,800,170,860,165,920,158,970,132,1020,140]),
  pts(Z11, [40,275,85,300,140,285,200,262,250,250,300,240,340,238,380,260,430,275,500,265,540,270,600,290,650,295,700,292,770,290,800,260,840,225,890,200,930,135,960,95,1000,60,1050,20]),
  pts(Z7, [80,490,130,340,180,190,237,50,260,-24,320,-51,358,-9,400,120,430,260,460,310,500,290,540,240,590,190,620,210,650,260,680,305,720,295,780,270,830,270,880,230,940,180])
);
const tealTop = join(
  pts(Z8, [10,490,60,460,130,400,200,370,250,325,300,300,340,270,400,250,470,230,520,215,580,220,640,215,700,225,760,230,820,220,900,205,1020,200]),
  pts(Z11, [40,315,85,330,140,318,200,310,250,300,340,290,430,290,500,285,600,295,700,295,800,295,860,250,930,220,1000,190,1050,165]),
  pts(Z7, [100,550,180,440,230,350,330,310,400,385,460,410,520,400,590,345,640,340,700,400,780,398,840,395,900,320,940,260])
);
const tealBottom = join(
  pts(Z8, [10,540,60,530,100,490,180,480,260,450,340,435,400,420,470,380,520,300,570,290,640,320,700,320,780,320,860,310,900,265,960,255,1020,245]),
  pts(Z11, [40,360,85,358,140,350,200,340,280,335,340,310,430,318,500,312,580,318,650,318,700,325,760,320,800,310,900,290,1050,275]),
  pts(Z7, [150,690,300,645,420,610,520,590,590,485,640,490,700,495,760,470,840,430,940,385])
);
const purple = join(
  pts(Z8, [30,525,100,510,200,478,260,450,340,430,430,400,470,385,520,362,570,340,620,326,700,326,860,315,940,305,1020,293]),
  pts(Z11, [85,400,170,375,240,350,300,335,360,328,430,322,470,315,560,312,640,320,720,318,800,312,870,305,960,290,1050,275]),
  pts(Z7, [230,675,300,650,380,630,480,600,560,575,620,555,680,545,760,515,840,490,940,440])
);
const greenThick = join(
  pts(Z8, [10,650,100,635,250,620,400,600,520,570,700,545,820,510,950,480,1020,462]),
  pts(Z11, [340,510,480,480,620,450,780,420,900,395,1050,367]),
  pts(Z7, [590,720,700,690,820,665,940,633])
);
const pink = [[28,363],[58,372],[92,380],[125,385],[168,392],[198,392],[232,396],[258,400],[292,402],[325,404],[365,407],[440,414],[520,418],[600,416],[700,410],[760,407],[800,400],[860,395],[920,389],[1013,375]];

area(brownTop, tealBottom, 'url(#brownDots)');
area(tealTop, tealBottom, 'url(#tealDots)');

const redTop = [[26,436]].concat(purple, [[1022,207]]);
const redBottom = [[26,477]].concat(greenThick, [[1022,270]]);
el('polygon', { points: str(redTop.concat(redBottom.reverse())), fill: 'url(#redDots)' });

/* ---- reference lines ---- */
dash(Z8, [120,315,256,325,520,103,555,885,40,900,980,97,990,1020,130], '#b498e8');
dash(Z11, [40,245,250,305,520,200,535,760,255,945,1050,44], '#b498e8');
dash(Z7, [0,230,522,245,580,22,595,940,198], '#b498e8');
dash(Z8, [5,20,580,60,220,562,240,430,367,465,630,322,650,830,314,875,1010,256], '#ffa800');
dash(Z11, [20,210,352,670,1050,349], '#ffa800');
dash(Z7, [65,250,670,295,420,373,435,650,622,660,810,562,820,940,382], '#ffa800');
el('line', { x1: 904, x2: 1040, y1: 66.5, y2: 66.5, stroke: '#f4f4f4' });
el('line', { x1: 370, x2: 1040, y1: 408.5, y2: 408.5, stroke: '#8a8a8a' });
el('line', { x1: 922, x2: 1040, y1: 229.5, y2: 229.5, stroke: '#20d020' });

/* ---- moving averages ---- */
line(greenThick, '#0f8f68', 4);
line(pink, '#8a2c70', 2);
line(purple, '#c000ff', 4);
line(pts(Z7, [50,720,250,665]), '#1030e0', 1);
line(pts(Z7, [680,545,780,520,940,483]), '#e81010', 1);
line(pts(Z7, [780,525,850,505]), '#1030e0', 1);
line(pts(Z11, [650,345,800,312]), '#1030e0', 1);
line(pts(Z7, [230,22,940,385]), '#ff1010', 1);

const maWhite = join(
  pts(Z8, [35,525,90,410,120,345,150,325,170,325,217,310,240,285,262,240,287,190,310,180,340,190,355,205,377,255,400,268,424,275,445,265,468,205,500,170,530,150,560,150,583,170,606,215,628,250,652,260,676,265,698,275,721,282,743,262,766,240,790,212,811,195,835,182,880,182,930,185,950,180,990,180,1020,188]),
  pts(Z11, [37,325,60,340,82,350,106,340,127,315,151,300,175,290,197,280,220,285,289,278,334,285,358,290,403,290,448,285,472,285,493,268,517,275,541,290,586,300,631,300,655,310,700,322,724,320,745,310,769,298,793,290,814,275,838,250,882,225,907,205,928,185,952,155,976,135,997,120,1021,118,1050,115]),
  pts(Z7, [70,590,110,470,150,350,185,300,215,200,235,170,255,172,275,210,300,262,330,270,360,320,395,430,420,500,440,540,460,550,485,500,510,440,540,345,575,320,596,305,620,340,650,420,680,450,710,440,730,385,770,330,800,305,860,270,895,265,915,300,940,170])
);
const maYellow = join(
  pts(Z8, [35,520,70,470,125,370,170,310,210,320,230,305,290,240,340,205,377,225,424,258,445,262,490,215,530,165,583,180,628,225,676,268,721,275,760,240,790,225,830,195,880,183,950,180,1020,185]),
  pts(Z11, [30,305,60,330,100,340,140,330,175,295,220,285,270,275,330,282,380,300,424,318,448,310,493,288,540,278,590,300,640,305,680,315,720,322,770,310,820,280,880,230,920,210,960,170,1000,130,1050,112]),
  pts(Z7, [80,580,120,490,160,380,200,270,230,230,260,215,300,215,345,305,395,345,420,440,460,510,495,510,530,430,570,330,600,305,620,330,660,400,700,450,740,400,790,335,830,315,860,295,895,285,925,260,940,205])
);
const maRed = join(
  pts(Z8, [55,505,100,470,150,450,195,425,240,370,285,330,310,295,350,265,424,262,445,250,490,225,530,205,583,205,640,215,720,215,766,210,811,222,860,225,930,215,990,195,1020,190]),
  pts(Z11, [40,320,82,315,130,312,190,300,250,300,330,300,400,310,470,295,540,290,620,300,700,310,790,305,850,285,900,278,980,235,1050,185]),
  pts(Z7, [100,600,150,550,210,440,270,370,330,310,350,290,400,340,450,380,500,385,560,390,620,390,660,395,710,395,760,365,830,355,895,355,940,300])
);
const maCyan = join(
  pts(Z8, [10,430,50,455,130,450,215,450,260,420,330,375,400,340,450,315,500,270,560,235,600,222,660,225,720,222,800,222,880,208,960,203,1020,205]),
  pts(Z11, [60,325,130,325,200,308,270,300,350,295,440,305,530,295,600,295,680,300,770,310,850,290,940,275,1050,235]),
  pts(Z7, [80,680,150,600,220,530,290,460,360,410,415,405,500,380,530,362,590,340,640,350,700,385,780,398,840,395,890,375,940,325])
);
line(maRed, '#f00000', 2);
line(maCyan, '#00f0f0', 2);
line(pts(Z8, [10,500,40,520]), '#00e000', 2);
line(pts(Z8, [620,213,745,213]), '#00e000', 2);
line(pts(Z11, [375,292,430,292]), '#00e000', 2);
line(pts(Z11, [640,297,740,297]), '#00e000', 2);
line(pts(Z7, [350,295,365,288,420,315,510,380]), '#00e000', 2);
line(pts(Z7, [630,425,690,428]), '#00e000', 2);
line(maWhite, '#fff', 2);
line(maYellow, '#ffff00', 2);

/* ---- price candles: [kind, bodyTop, bodyBottom, high, low] in crop coordinates ---- */
const cA = [['b',507,540,500,540],['b',530,540,520,565],['r',460,532,460,532],['r',334,450,334,450],['b',289,325,255,350],['b',316,343,305,375],['r',311,334,290,345],['b',295,310,258,340],['b',306,348,265,360],['r',275,352,258,362],['r',252,262,190,290],['r',197,238,172,260],['r',175,240,150,290],['b',160,174,105,182],['b',166,209,150,225],['b',208,264,195,270],['r',250,268,235,300],['b',258,300,216,315],['r',279,318,250,320],['r',223,262,212,290],['r',150,202,125,218],['b',150,180,125,200],['r',124,185,120,190],['b',124,135,40,160],['b',130,195,120,205],['r',142,205,130,215],['b',138,266,128,285],['r',262,272,240,315],['b',250,267,225,280],['b',247,300,236,310],['r',279,312,250,315],['r',225,285,205,320],['b',262,268,250,275],['r',205,220,182,235],['b',180,188,160,215],['r',172,192,165,210],['b',172,215,150,230],['r',175,220,162,255],['b',166,171,97,225],['b',178,185,175,248],['b',180,188,175,237],['r',138,206,130,210],['b',142,170,130,175],['b',180,193,170,235]];
const cB = [['b',305,315,295,320],['b',310,348,300,358],['b',350,390,340,400],['r',360,400,355,420],['r',292,370,285,395],['b',280,290,248,318],['b',283,312,265,328],['r',262,310,243,318],['b',265,282,240,300],['b',276,290,265,310],['r',280,284,265,300],['r',258,280,225,298],['b',262,276,198,290],['b',285,293,280,332],['r',285,292,270,310],['b',277,310,270,320],['b',308,345,295,350],['r',322,340,320,345],['r',318,330,300,335],['r',276,320,262,325],['r',268,275,265,295],['r',263,285,262,290],['b',256,285,255,310],['b',290,302,278,310],['r',284,302,282,310],['b',282,310,280,316],['b',300,320,295,330],['r',300,320,295,330],['b',293,347,290,350],['r',308,344,300,345],['b',312,323,310,335],['r',316,328,312,345],['r',292,325,282,330],['b',300,305,282,310],['r',268,305,255,312],['r',258,268,250,280],['r',228,258,212,262],['b',210,232,190,248],['r',222,232,212,258],['r',198,222,185,232],['r',144,180,42,200],['r',130,160,102,170],['r',126,150,120,170],['r',100,122,52,125]];
const cC = [['b',565,595,555,615],['b',590,618,585,640],['b',600,652,590,672],['r',580,635,560,640],['r',405,567,362,570],['b',340,410,285,495],['r',318,382,272,420],['b',297,370,270,420],['r',232,335,195,340],['r',148,215,105,240],['b',132,140,22,170],['b',178,227,140,262],['b',226,327,215,375],['r',240,293,155,310],['b',216,233,172,270],['b',244,362,235,370],['b',354,405,300,455],['b',396,494,390,533],['b',526,605,475,618],['r',514,590,510,615],['b',514,550,418,595],['r',426,540,415,555],['r',390,432,340,440],['r',342,365,305,470],['r',255,352,245,355],['r',232,292,200,320],['b',262,302,212,320],['b',312,474,275,480],['b',502,532,470,555],['r',456,548,425,550],['r',450,484,400,515],['r',347,444,320,450],['r',336,342,300,400],['r',316,334,280,370],['r',308,340,298,350],['b',286,333,255,385],['r',298,332,270,350],['r',280,318,245,360],['r',234,264,222,300],['b',232,268,225,310],['r',144,285,65,315],['r',105,158,20,200]];

function candle(i, c, oy) {
  const x = Math.round(X(i));
  const y = v => oy + v / 3;
  const red = c[0] === 'r';
  const wick = x + .5;
  el('line', { x1: wick, x2: wick, y1: y(c[3]), y2: y(c[4]), stroke: red ? '#ff2020' : '#00e4ff' });
  const top = Math.round(y(c[1])), h = Math.max(2, Math.round(y(c[2]) - y(c[1])));
  if (red) {
    el('rect', { x: x - 3, y: top, width: 7, height: h, fill: '#f00000' });
  } else {
    el('rect', { x: x - 3, y: top, width: 7, height: h, fill: 'url(#blueDots)' });
    el('path', { d: `M${x - 2.5} ${top}V${top + h - .5}H${x + 3.5}`, fill: 'none', stroke: '#0048f0' });
  }
}
cA.forEach((c, k) => candle(k, c, Z8[1]));
cB.forEach((c, k) => candle(44 + k, c, Z11[1]));
cC.forEach((c, k) => candle(88 + k, c, Z7[1]));

/* ---- little markers ---- */
const xm = [29.4,51.8,67,106.5,113.5,121,136,151,220,228.6,235,251,388,396,510,854,907,915,922,937,968.6,976,983.7];
xm.forEach(x => {
  const q = Math.round(x);
  el('path', { d: `M${q - 2} 41l4 4m0 -4l-4 4`, stroke: '#ff20ff', 'stroke-width': 1.3 });
});

/* hollow arrows */
[[174,365],[265,375],[571,344],[921,259]].forEach(a => {
  el('path', { d: `M${a[0]} ${a[1] - 7}l6 6h-3v7h-6v-7h-3z`, fill: '#e00000', stroke: '#b0a0a0' });
});

/* ---- lower chart ---- */
function bandColors(ranges, y, h, fallback) {
  for (let i = 0; i < 130; i++) {
    let c = fallback;
    for (const r of ranges) if (i >= r[0] && i <= r[1]) c = r[2];
    const left = i === 0 ? 26 : Math.floor(X(i) - 3.8);
    el('rect', { x: left, y, width: i === 0 ? 5 : 7, height: h, fill: c });
  }
}
const W = '#ffffff', Cy = '#00f4f4';
bandColors([[0,2,Cy],[16,19,Cy],[25,48,Cy],[60,63,Cy],[67,76,Cy],[90,90,Cy],[100,100,Cy],[104,112,Cy],[116,121,Cy]], 599, 5, W);
bandColors([], 721, 6, '#ff0000');
bandColors([[0,0,Cy],[9,10,Cy],[25,36,Cy],[42,50,Cy],[60,66,Cy],[75,85,Cy],[100,112,Cy]], 844, 5, W);

const lowYellow = join(
  pts(L9, [10,550,40,595,70,630,100,645,120,650,150,643,180,628,210,603,240,570,270,530,300,480,330,440,365,400,400,370,430,350,460,338,500,320,540,290,580,270,610,268,640,285,670,310,700,350,730,385,760,425,790,460,820,485,860,512,900,527,960,540,1020,541]),
  pts(L12, [40,485,80,500,120,516,200,520,270,510,340,488,400,481,445,487,490,480,540,463,580,460,630,468,660,490,700,530,750,570,790,600,820,607,850,598,890,570,930,515,975,465,1010,420,1050,378]),
  pts(L10, [55,560,110,515,170,455,235,395,290,365,330,358,385,372,420,410,460,465,500,530,545,585,600,625,660,665,720,705,770,725,810,731,870,723,910,705,937,690])
);
const lowWhite = join(
  pts(L9, [10,668,22,678,45,655,62,610,72,530,80,470,105,375,125,345,172,298,192,333,238,215,262,120,287,40,310,52,332,100,355,170,377,220,400,284,424,310,445,265,468,175,492,135,515,62,538,82,560,140,583,150,606,225,628,305,652,352,676,405,698,423,721,388,743,372,766,345,811,267,835,295,859,299,880,335,905,390,927,421,950,364,973,372,995,415,1020,470]),
  pts(L12, [37,490,58,630,82,660,106,570,127,500,151,498,175,420,197,395,220,330,242,280,265,196,289,204,310,248,334,262,358,310,379,415,403,436,424,440,448,355,472,290,493,260,517,300,541,367,562,368,586,420,610,490,631,478,655,580,676,560,700,575,724,595,745,520,769,490,793,430,814,330,838,200,859,150,882,110,907,38,928,118,952,148,976,157,997,125,1021,122,1045,148]),
  pts(L10, [22,365,46,442,70,390,91,248,115,285,139,222,161,212,184,172,208,160,230,178,253,235,275,350,298,365,322,370,343,440,367,520,391,630,412,742,436,770,460,802,481,750,505,685,526,620,550,555,574,493,595,503,619,640,643,765,664,790,688,818,709,770,733,715,757,680,779,640,802,638,826,608,848,595,871,550,895,548,917,430,940,345])
);
line(lowWhite, '#ffffff', 1);
line(lowYellow, '#ffff00', 1);
el('rect', { x: 766, y: 517, width: 7, height: 62, fill: '#ff0000' });

const hA = [[610,652,'w'],[646,722,'w'],[676,734,'w'],[668,674,'r'],[580,640,'r'],[532,604,'r'],[478,562,'r'],[424,516,'r'],[403,478,'r'],[367,442,'r'],[301,394,'r'],[235,340,'r'],[181,290,'r'],[151,245,'r'],[151,211,'r'],[175,199,'r'],[202,202,'w'],[211,233,'w'],[229,262,'w'],[238,254,'w'],[208,226,'r'],[184,214,'r'],[142,190,'r'],[124,170,'r'],[145,160,'r'],[150,158,'r'],[169,193,'w'],[196,250,'w'],[229,292,'w'],[262,334,'w'],[298,367,'w'],[325,380,'w'],[352,403,'w'],[376,430,'w'],[394,430,'w'],[406,430,'w'],[421,451,'w'],[433,454,'w'],[433,433,'w'],[445,472,'w'],[463,502,'w'],[469,484,'w'],[472,472,'w'],[481,499,'w']];
const hB = [[430,454,'w'],[451,490,'w'],[487,556,'w'],[523,595,'w'],[541,580,'w'],[536,536,'r'],[520,532,'r'],[478,514,'r'],[451,493,'r'],[403,462,'r'],[364,430,'r'],[304,388,'r'],[268,349,'r'],[283,325,'r'],[283,310,'r'],[298,307,'r'],[325,361,'w'],[358,421,'w'],[388,451,'w'],[403,433,'w'],[403,403,'r'],[373,394,'r'],[364,382,'r'],[385,385,'w'],[388,388,'w'],[394,412,'w'],[412,445,'w'],[427,454,'w'],[451,499,'w'],[472,517,'w'],[493,535,'w'],[514,559,'w'],[520,535,'w'],[518,518,'r'],[508,517,'r'],[472,502,'r'],[397,465,'r'],[328,421,'r'],[280,373,'r'],[211,319,'r'],[205,283,'r'],[208,256,'r'],[199,238,'r'],[166,214,'r'],[148,193,'r'],[148,178,'r']];
const hC = [[392,398,'w'],[378,388,'r'],[331,367,'r'],[328,355,'r'],[295,334,'r'],[271,313,'r'],[247,292,'r'],[230,271,'r'],[223,256,'r'],[252,252,'r'],[268,301,'w'],[286,316,'w'],[298,325,'w'],[322,370,'w'],[355,424,'w'],[403,499,'w'],[466,592,'w'],[529,655,'w'],[589,706,'w'],[634,724,'w'],[664,727,'w'],[676,700,'w'],[665,672,'r'],[622,655,'r'],[604,637,'r'],[643,652,'w'],[673,730,'w'],[703,766,'w'],[733,793,'w'],[748,775,'w'],[749,749,'w'],[730,742,'r'],[712,733,'r'],[703,724,'r'],[691,712,'r'],[664,697,'r'],[631,676,'r'],[613,655,'r'],[535,613,'r'],[466,565,'r']];

function hollow(i, c, oy) {
  const x = Math.round(X(i));
  const top = Math.round(oy + c[0] / 3), bot = Math.round(oy + c[1] / 3);
  const col = c[2] === 'r' ? '#f00000' : '#ffffff';
  if (bot - top < 1) {
    el('rect', { x: x - 3, y: top, width: 7, height: 2, fill: col });
  } else {
    el('rect', { x: x - 2.5, y: top + .5, width: 6, height: bot - top, fill: '#000', stroke: col });
  }
}
hA.forEach((c, k) => hollow(k, c, L9[1]));
hB.forEach((c, k) => hollow(44 + k, c, L12[1]));
hC.forEach((c, k) => hollow(90 + k, c, L10[1]));

/* ---- frame and axis ---- */
const frame = '#c00000';
el('line', { x1: 24, x2: 1086, y1: 497.5, y2: 497.5, stroke: frame });
el('line', { x1: 24, x2: 1086, y1: 936.5, y2: 936.5, stroke: frame });
el('line', { x1: 1040.5, x2: 1040.5, y1: 22, y2: 953, stroke: frame });

[[60,464],[517,844]].forEach((range, k) => {
  const step = k === 0 ? 36.7 / 5 : 40.9 / 5;
  let n = 0;
  for (let y = range[0]; y <= range[1] + 1; y += step, n++) {
    const q = Math.round(y) + .5;
    el('line', { x1: 1041, x2: n % 5 === 0 ? 1047 : 1044, y1: q, y2: q, stroke: '#ff2020' });
  }
});
for (let x = 128; x < 1030; x += 38) {
  el('line', { x1: x + .5, x2: x + .5, y1: 933, y2: 936, stroke: frame });
}
[128, 281, 418, 461, 539, 585, 761, 921].forEach(x => {
  el('line', { x1: x + .5, x2: x + .5, y1: 937, y2: 952, stroke: frame });
});

/* candles that paint over the last time-window label */
layer = replot;
candle(115, cC[27], Z7[1]);
candle(119, cC[31], Z7[1]);
layer = plot;

/* ---- tick list ---- */
const ticks = [
 ['14:57','10.04','171','B'],['14:57','10.03','45',''],['14:58','10.03','358','B'],['14:58','10.02','849','S',1],['14:58','10.00','1047','S',1],
 ['14:58','10.00','426','B'],['14:58','10.00','497','B'],['14:58','10.00','541','B',1],['14:58','9.99','117','S'],['14:58','10.01','1156','B',1],
 ['14:58','10.00','154','S'],['14:58','10.00','156','S'],['14:58','10.00','145','S'],['14:58','10.01','313',''],['14:59','10.01','180','S'],
 ['14:59','10.01','441','S'],['14:59','10.01','56','S'],['14:59','10.02','452','B'],['14:59','10.02','3725','B',1],['14:59','10.02','150','B'],
 ['14:59','10.03','585','B',1],['14:59','10.02','396','S'],['14:59','10.02','149','S'],['14:59','10.03','84',''],['14:59','10.02','157','S'],
 ['14:59','10.02','197','S'],['15:00','10.02','449','S'],['15:00','10.04','338','B'],['15:00','10.01','0','']
];
const box = document.getElementById('ticks');
ticks.forEach(t => {
  const row = document.createElement('div');
  row.className = 'tick';
  const flagClass = t[3] === 'B' ? 'red' : 'grn';
  row.innerHTML = `<span class="tick-t">${t[0]}</span><span class="tick-p">${t[1]}</span>` +
    `<span class="tick-v ${t[4] ? 'mag' : 'yel'}">${t[2]}</span><span class="tick-f ${flagClass}">${t[3]}</span>`;
  box.appendChild(row);
});
```
